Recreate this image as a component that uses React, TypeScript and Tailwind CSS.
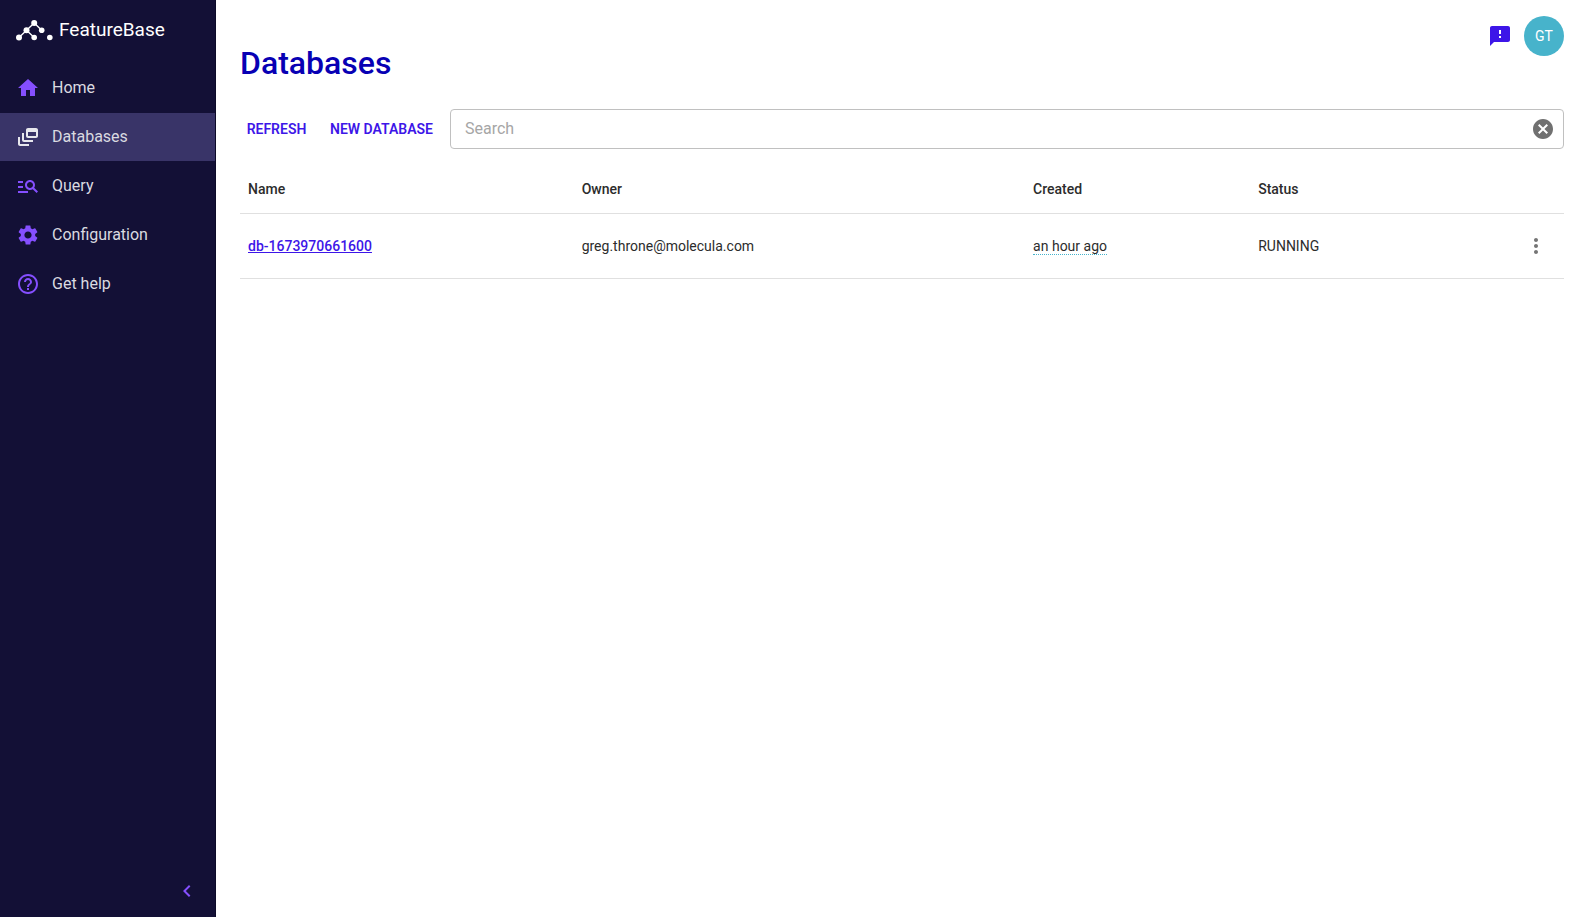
import { useState } from 'react';
import type { IconType } from 'react-icons';
import {
  MdCancel,
  MdChevronLeft,
  MdFeedback,
  MdHelpOutline,
  MdHome,
  MdManageSearch,
  MdMoreVert,
  MdOutlineDynamicFeed,
  MdSettings,
} from 'react-icons/md';

interface NavItem {
  label: string;
  icon: IconType;
  active?: boolean;
}

interface Database {
  name: string;
  owner: string;
  created: string;
  status: string;
}

const navItems: NavItem[] = [
  { label: 'Home', icon: MdHome },
  { label: 'Databases', icon: MdOutlineDynamicFeed, active: true },
  { label: 'Query', icon: MdManageSearch },
  { label: 'Configuration', icon: MdSettings },
  { label: 'Get help', icon: MdHelpOutline },
];

const databases: Database[] = [
  {
    name: 'db-1673970661600',
    owner: 'greg.throne@molecula.com',
    created: 'an hour ago',
    status: 'RUNNING',
  },
];

function LogoMark() {
  return (
    <svg viewBox="0 0 37 21" className="h-[21px] w-[37px]" fill="#fff" stroke="#fff" aria-hidden="true">
      <path d="M3 17.5 18.2 3l7.500 7.200M10.500 10.200l7.700 7.300" fill="none" strokeWidth="1.300" />
      <g stroke="none">
        <circle cx="3" cy="17.500" r="3" />
        <circle cx="10.500" cy="10.200" r="3" />
        <circle cx="18.200" cy="3" r="3" />
        <circle cx="25.700" cy="10.200" r="2.800" />
        <circle cx="18.200" cy="17.500" r="2.800" />
        <circle cx="33.800" cy="17.500" r="2.800" />
      </g>
    </svg>
  );
}

function Sidebar() {
  return (
    <aside className="flex w-[216px] shrink-0 flex-col border-r border-[#0c0a28] bg-[#131036]">
      <a href="#" className="flex h-16 items-center gap-1.5 pb-1 pl-4 text-white">
        <LogoMark />
        <span className="text-[19px]">FeatureBase</span>
      </a>
      <nav className="flex flex-col gap-px">
        {navItems.map(({ label, icon: Icon, active }) => (
          <a
            key={label}
            href="#"
            aria-current={active ? 'page' : undefined}
            className={`flex h-12 items-center gap-3 px-4 text-base text-[#dadae0] ${active ? 'bg-[#393468]' : ''}`}
          >
            <Icon className={`size-6 ${active ? 'text-[#e7e7ed]' : 'text-[#854fff]'}`} />
            {label}
          </a>
        ))}
      </nav>
      <button type="button" aria-label="Collapse menu" className="mt-auto mr-4 mb-3.5 self-end text-[#854fff]">
        <MdChevronLeft className="size-6" />
      </button>
    </aside>
  );
}

function Toolbar({ query, onQuery }: { query: string; onQuery: (value: string) => void }) {
  return (
    <div className="flex items-center gap-2">
      <button type="button" className="min-w-[73px] text-sm font-semibold text-[#3d16e8]">
        REFRESH
      </button>
      <button type="button" className="min-w-[121px] text-sm font-semibold text-[#3d16e8]">
        NEW DATABASE
      </button>
      <div className="flex h-10 flex-1 items-center rounded border border-[#c0c0c0] pr-2 pl-3.5">
        <input
          type="text"
          aria-label="Search"
          placeholder="Search"
          value={query}
          onChange={(event) => onQuery(event.target.value)}
          className="min-w-0 flex-1 bg-transparent text-base outline-none placeholder:text-[#a6a6a6]"
        />
        <button type="button" aria-label="Clear search" onClick={() => onQuery('')} className="text-[#707070]">
          <MdCancel className="size-6" />
        </button>
      </div>
    </div>
  );
}

function DatabaseTable({ rows }: { rows: Database[] }) {
  return (
    <table className="mt-4 w-full table-fixed border-collapse text-left text-sm text-[#2c2c2c]">
      <thead>
        <tr className="h-12 border-b border-[#e0e0e0]">
          <th className="w-[25.2%] px-2 font-medium">Name</th>
          <th className="w-[34.1%] px-2 font-medium">Owner</th>
          <th className="w-[17%] px-2 font-medium">Created</th>
          <th className="px-2 font-medium">Status</th>
          <th className="w-14" aria-label="Actions" />
        </tr>
      </thead>
      <tbody>
        {rows.map((row) => (
          <tr key={row.name} className="h-[65px] border-b border-[#e0e0e0]">
            <td className="px-2">
              <a href="#" className="font-medium text-[#3d16e8] underline">
                {row.name}
              </a>
            </td>
            <td className="px-2">{row.owner}</td>
            <td className="px-2">
              <span className="border-b border-dotted border-[#47b3cb]">{row.created}</span>
            </td>
            <td className="px-2">{row.status}</td>
            <td>
              <button type="button" aria-label="More actions" className="ml-4 block text-[#757575]">
                <MdMoreVert className="size-6" />
              </button>
            </td>
          </tr>
        ))}
      </tbody>
    </table>
  );
}

export default function App() {
  const [query, setQuery] = useState('');
  const rows = databases.filter((db) => db.name.includes(query));

  return (
    <div className="flex min-h-screen bg-white font-['Roboto',sans-serif]">
      <Sidebar />
      <main className="min-w-0 flex-1 pt-4 pr-[19px] pl-6">
        <header className="flex items-start justify-between">
          <h1 className="mt-6 text-[32px] leading-[46px] font-medium text-[#0800b4]">Databases</h1>
          <div className="flex items-center gap-3">
            <button type="button" aria-label="Send feedback" className="text-[#3d16e8]">
              <MdFeedback className="size-6" />
            </button>
            <button
              type="button"
              aria-label="Account"
              className="flex size-10 items-center justify-center rounded-full bg-[#47b3cb] text-sm text-white"
            >
              GT
            </button>
          </div>
        </header>
        <div className="mt-[23px]">
          <Toolbar query={query} onQuery={setQuery} />
        </div>
        <DatabaseTable rows={rows} />
      </main>
    </div>
  );
}
